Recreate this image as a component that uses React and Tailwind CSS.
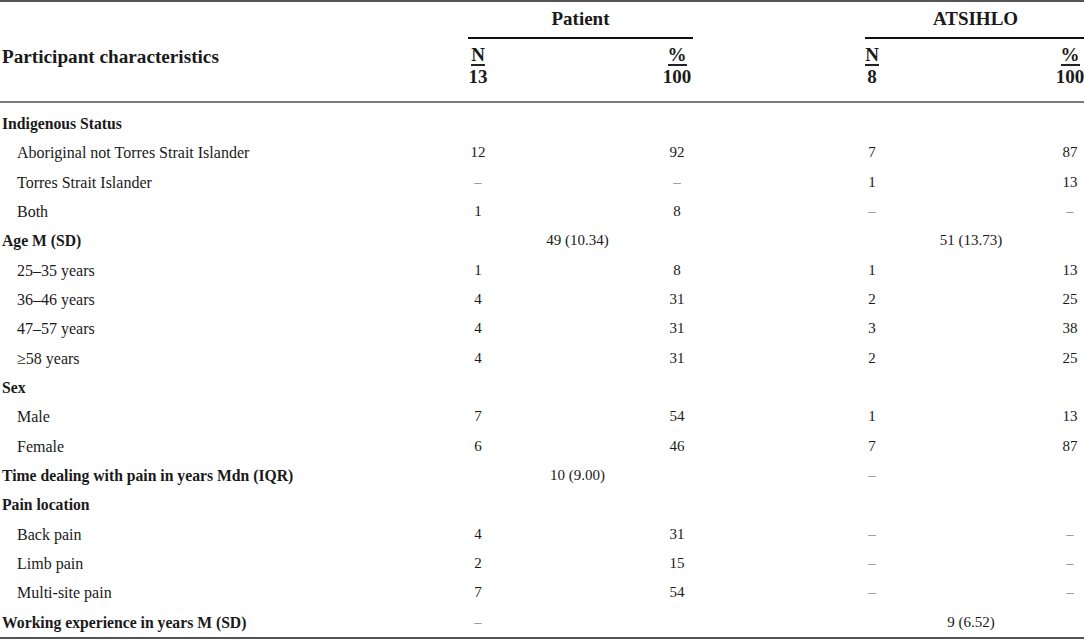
const rows = [
  { label: "Indigenous Status", bold: true },
  { label: "Aboriginal not Torres Strait Islander", v: ["12", "92", "7", "87"] },
  { label: "Torres Strait Islander", v: ["–", "–", "1", "13"] },
  { label: "Both", v: ["1", "8", "–", "–"] },
  { label: "Age M (SD)", bold: true, p: "49 (10.34)", a: "51 (13.73)" },
  { label: "25–35 years", v: ["1", "8", "1", "13"] },
  { label: "36–46 years", v: ["4", "31", "2", "25"] },
  { label: "47–57 years", v: ["4", "31", "3", "38"] },
  { label: "≥58 years", v: ["4", "31", "2", "25"] },
  { label: "Sex", bold: true },
  { label: "Male", v: ["7", "54", "1", "13"] },
  { label: "Female", v: ["6", "46", "7", "87"] },
  { label: "Time dealing with pain in years Mdn (IQR)", bold: true, p: "10 (9.00)", v: [null, null, "–", ""] },
  { label: "Pain location", bold: true },
  { label: "Back pain", v: ["4", "31", "–", "–"] },
  { label: "Limb pain", v: ["2", "15", "–", "–"] },
  { label: "Multi-site pain", v: ["7", "54", "–", "–"] },
  { label: "Working experience in years M (SD)", bold: true, a: "9 (6.52)", v: ["–", "", null, null] },
]

const cols = "grid grid-cols-[458px_40px_159px_40px_155px_40px_158px_40px]"

function Cell({ children, className = "" }) {
  const dash = children === "–"
  return (
    <div className={`flex items-center justify-center text-[15px] whitespace-nowrap ${dash ? "text-[#8a8a8a]" : ""} ${className}`}>
      {children}
    </div>
  )
}

function Row({ row }) {
  const v = row.v || []
  return (
    <div className={`${cols} h-[29.33px] leading-[29.33px]`}>
      <div className={`col-start-1 whitespace-nowrap ${row.bold ? "pl-[2px] font-bold text-[15.7px]" : "pl-[17px] text-[16px]"}`}>
        {row.label}
      </div>
      {row.p ? (
        <Cell className="col-start-2 col-span-3">{row.p}</Cell>
      ) : (
        <>
          <Cell className="col-start-2">{v[0]}</Cell>
          <Cell className="col-start-4">{v[1]}</Cell>
        </>
      )}
      {row.a ? (
        <Cell className="col-start-6 col-span-3">{row.a}</Cell>
      ) : (
        <>
          <Cell className="col-start-6">{v[2]}</Cell>
          <Cell className="col-start-8">{v[3]}</Cell>
        </>
      )}
    </div>
  )
}

function Group({ title, n, className }) {
  return (
    <div className="flex flex-col">
      <div className={`h-[37px] flex items-center justify-center border-b-2 border-[#111] text-[19px] font-bold ${className}`}>
        {title}
      </div>
      <div className="flex justify-between pt-[7px] text-[19px] font-bold leading-[18px]">
        <div className="w-[40px] flex flex-col items-center">
          <span className="border-b-2 border-[#222]">N</span>
          <span className="mt-[1.5px]">{n}</span>
        </div>
        <div className="w-[40px] flex flex-col items-center">
          <span className="border-b-2 border-[#222]">%</span>
          <span className="mt-[1.5px]">100</span>
        </div>
      </div>
    </div>
  )
}

export default function App() {
  return (
    <div className="w-[1084px] h-[640px] overflow-hidden bg-white text-[#1a1a1a] font-['Liberation_Serif','Times_New_Roman',serif]">
      <div className="w-[1090px] border-t-2 border-b-2 border-[#555]">
        {/* header */}
        <div className={`${cols} h-[101px] border-b-2 border-[#7a7a7a]`}>
          <div className="col-start-1 pl-[2px] pt-[45px] text-[19.2px] font-bold leading-[19px] whitespace-nowrap">
            Participant characteristics
          </div>
          <div className="col-start-2 col-span-3">
            <Group title="Patient" n="13" className="ml-[10px] mr-[4px]" />
          </div>
          <div className="col-start-6 col-span-3">
            <Group title="ATSIHLO" n="8" className="ml-[13px] mr-[4px]" />
          </div>
        </div>
        {/* body */}
        <div className="pt-[6px]">
          {rows.map((row, i) => (
            <Row key={i} row={row} />
          ))}
        </div>
      </div>
    </div>
  )
}
